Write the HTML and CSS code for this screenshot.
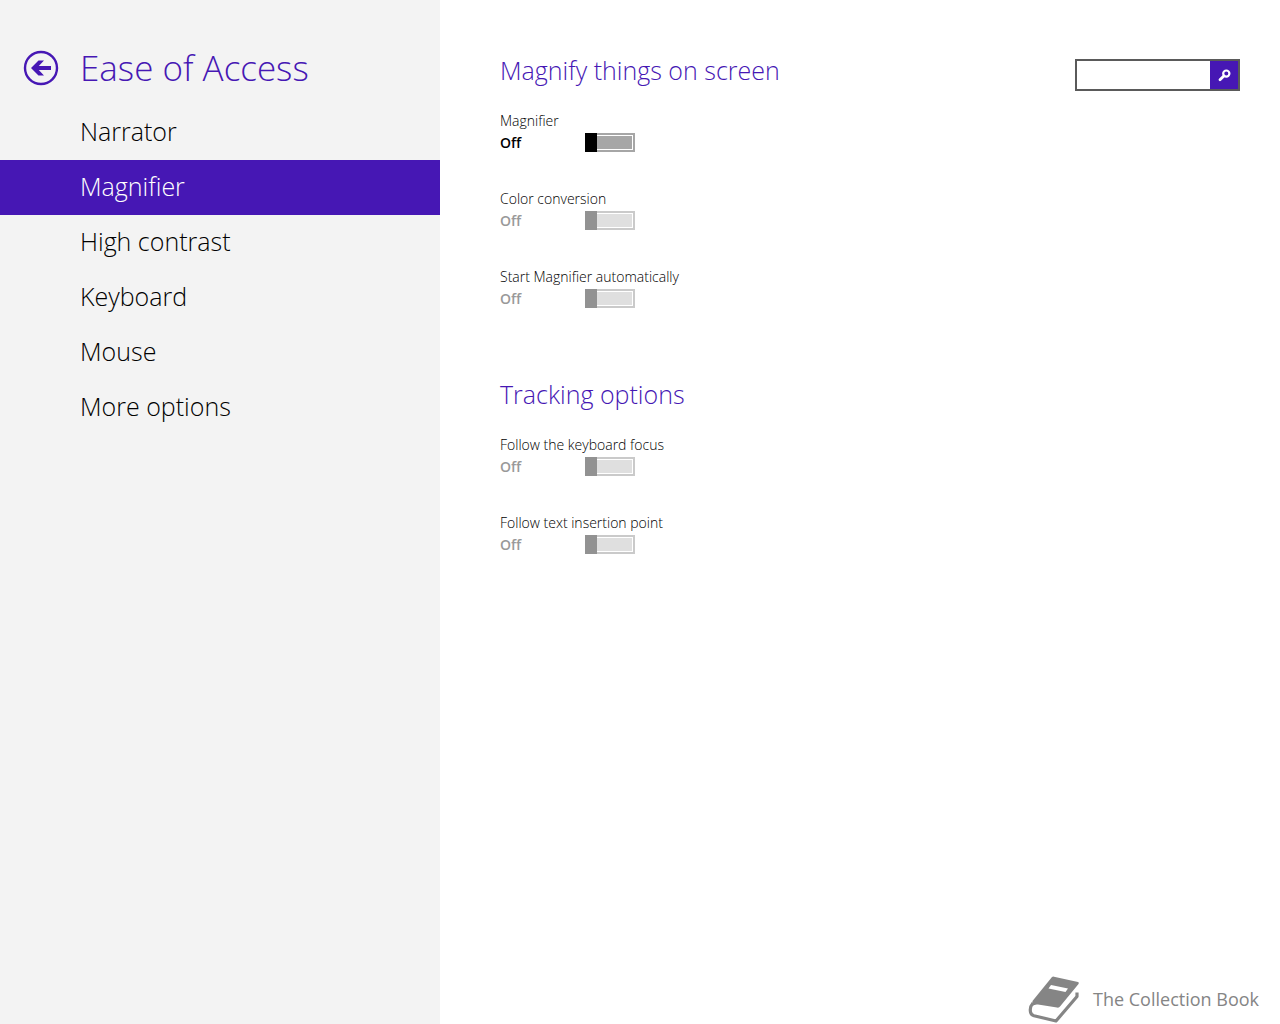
FILE: index.html
```
<!doctype html>
<html lang="en">

<head>
  <meta charset="utf-8">
  <meta name="viewport" content="width=device-width, initial-scale=1.0">
  <title>Ease of Access</title>
  <link rel="stylesheet" href="styles.css">
</head>

<body>

  <div class="sidebar">
    <div class="sidebar-head">
      <button class="back" type="button" aria-label="Back">
        <svg width="36" height="36" viewBox="0 0 36 36">
          <circle cx="18" cy="18" r="16" fill="none" stroke="currentColor" stroke-width="2.4" />
          <path d="M8 18L15.500 10.400H21L15.800 15.900H28V20.100H15.800L21 25.600H15.500Z" fill="currentColor" />
        </svg>
      </button>
      <h1>Ease of Access</h1>
    </div>
    <nav class="menu">
      <a href="#narrator">Narrator</a>
      <a href="#magnifier" class="active">Magnifier</a>
      <a href="#contrast">High contrast</a>
      <a href="#keyboard">Keyboard</a>
      <a href="#mouse">Mouse</a>
      <a href="#more">More options</a>
    </nav>
  </div>

  <div class="content">
    <main class="settings">
      <section>
        <h2>Magnify things on screen</h2>
        <div class="setting">
          <label for="magnifier">Magnifier</label>
          <div class="setting-row">
            <span class="state">Off</span>
            <input id="magnifier" class="toggle" type="checkbox" role="switch">
          </div>
        </div>
        <div class="setting disabled">
          <label for="color">Color conversion</label>
          <div class="setting-row">
            <span class="state">Off</span>
            <input id="color" class="toggle" type="checkbox" role="switch" disabled>
          </div>
        </div>
        <div class="setting disabled">
          <label for="autostart">Start Magnifier automatically</label>
          <div class="setting-row">
            <span class="state">Off</span>
            <input id="autostart" class="toggle" type="checkbox" role="switch" disabled>
          </div>
        </div>
      </section>

      <section>
        <h2>Tracking options</h2>
        <div class="setting disabled">
          <label for="focus">Follow the keyboard focus</label>
          <div class="setting-row">
            <span class="state">Off</span>
            <input id="focus" class="toggle" type="checkbox" role="switch" disabled>
          </div>
        </div>
        <div class="setting disabled">
          <label for="insertion">Follow text insertion point</label>
          <div class="setting-row">
            <span class="state">Off</span>
            <input id="insertion" class="toggle" type="checkbox" role="switch" disabled>
          </div>
        </div>
      </section>
    </main>

    <form class="search">
      <input type="text" aria-label="Search">
      <button type="submit" aria-label="Search">
        <svg width="14" height="14" viewBox="0 0 14 14">
          <circle cx="9.300" cy="5.600" r="3.100" fill="none" stroke="currentColor" stroke-width="2.200" />
          <path d="M6.800 8L3 11.800" stroke="currentColor" stroke-width="2.800" stroke-linecap="round" />
        </svg>
      </button>
    </form>

    <footer class="brand">
      <svg width="52" height="48" viewBox="0 0 52 48">
        <path d="M24 1Q25 .4 26 .7L50 6Q51.500 6.400 50.500 8L32 30.500Q31 32 29 31.500L10 28.500Q7 28 4 30L4.500 25Z" fill="currentColor" />
        <path d="M23 9L40 12.500L37.500 16L20.500 12.500Z" fill="#fff" />
        <path d="M5 27Q1.500 31 2.500 36Q3 39 6 39.800L28 45L49 20.500V16.500" fill="none" stroke="currentColor" stroke-width="3.200" stroke-linejoin="round" />
      </svg>
      <span>The Collection Book</span>
    </footer>
  </div>

</body>

</html>
```
FILE: styles.css
```
* {
  margin: 0;
  padding: 0;
  box-sizing: border-box;
}

body {
  display: flex;
  min-height: 100vh;
  background: #fff;
  color: #000;
  font: 300 14px/22px "Open Sans", "Noto Sans", sans-serif;
}

h1,
h2 {
  color: #4617b4;
  font-weight: 300;
}

button {
  border: none;
  cursor: pointer;
}

.sidebar {
  flex: 0 0 440px;
  background: #f3f3f3;
}

.sidebar-head {
  display: flex;
  align-items: center;
  gap: 21px;
  padding: 43px 23px 13px;
}

.sidebar-head h1 {
  font-size: 35px;
  line-height: 49px;
}

.back {
  display: flex;
  background: none;
  color: #4617b4;
}

.menu a {
  display: block;
  padding: 0 0 3px 80px;
  color: #000;
  font-size: 25px;
  line-height: 52px;
  text-decoration: none;
}

.menu .active {
  background: #4617b4;
  color: #fff;
}

.content {
  flex: 1;
  display: grid;
  grid-template-columns: 1fr auto;
  grid-template-rows: 1fr auto;
  padding: 52px 40px 0 60px;
}

.settings h2 {
  margin-bottom: 22px;
  font-size: 25px;
  line-height: 36px;
}

.settings section {
  margin-bottom: 32px;
}

.setting {
  padding-bottom: 34px;
}

.setting label {
  display: block;
}

.setting-row {
  display: flex;
  align-items: center;
}

.state {
  width: 85px;
  font-weight: 600;
}

.toggle {
  appearance: none;
  position: relative;
  width: 50px;
  height: 19px;
  margin-bottom: 2px;
  padding: 1px;
  border: 2px solid #a6a6a6;
  background: #a6a6a6 content-box;
}

.toggle::before {
  content: "";
  position: absolute;
  top: -2px;
  bottom: -2px;
  left: -2px;
  width: 12px;
  background: #000;
}

.toggle:checked::before {
  left: auto;
  right: -2px;
}

.disabled .state {
  color: #999;
}

.disabled .toggle {
  border-color: #cacaca;
  background-color: #dfdfdf;
}

.disabled .toggle::before {
  background: #929292;
}

.search {
  display: flex;
  align-self: start;
  height: 32px;
  margin-top: 7px;
  border: 2px solid #5a5a5a;
}

.search input {
  width: 133px;
  padding: 0 6px;
  border: none;
  outline: none;
  font: inherit;
}

.search button {
  display: flex;
  align-items: center;
  justify-content: center;
  width: 28px;
  background: #4617b4;
  color: #fff;
}

.brand {
  grid-column: 1 / 3;
  display: flex;
  align-items: center;
  justify-content: flex-end;
  gap: 13px;
  margin-right: -19px;
  color: #858585;
  font-size: 18px;
  font-weight: 400;
}

.brand span {
  padding-bottom: 2px;
}
```
